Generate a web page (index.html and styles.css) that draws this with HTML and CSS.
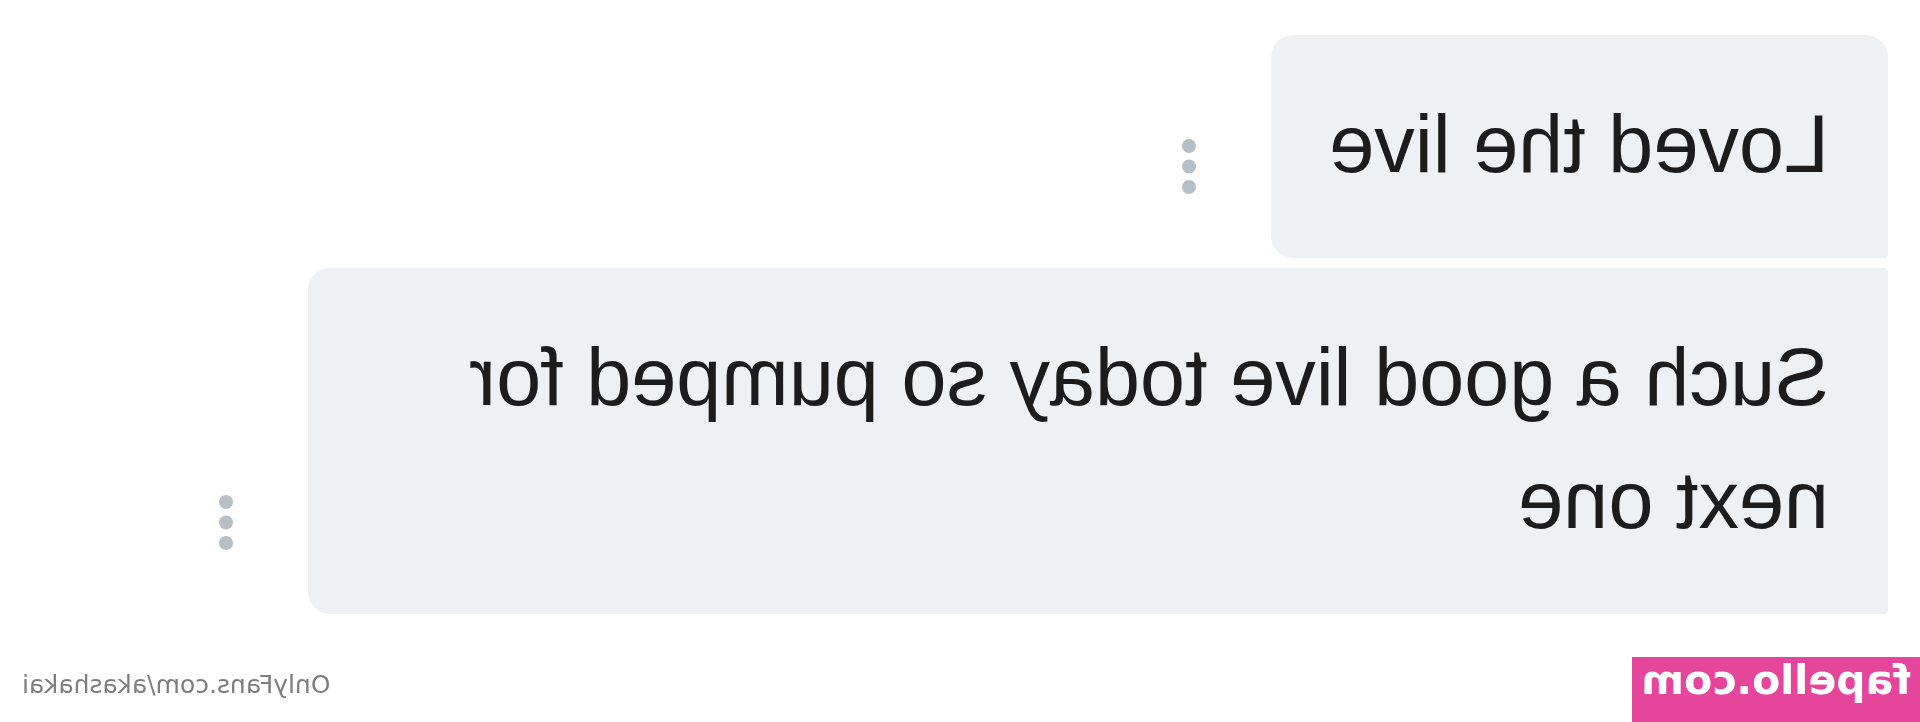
FILE: index.html
```html
<!DOCTYPE html>
<html lang="en">
<head>
    <meta charset="UTF-8">
    <title>Chat</title>
    <link rel="stylesheet" href="styles.css">
</head>
<body>
<div class="screen">
    <div class="thread">
        <div class="msg-row">
            <div class="bubble bubble-first">Loved the live</div>
            <svg class="more" width="14" height="55" viewBox="0 0 14 55">
                <circle cx="7" cy="7" r="7"/>
                <circle cx="7" cy="27.5" r="7"/>
                <circle cx="7" cy="48" r="7"/>
            </svg>
        </div>
        <div class="msg-row">
            <div class="bubble bubble-mid">Such a good live today so pumped for next one</div>
            <svg class="more" width="14" height="55" viewBox="0 0 14 55">
                <circle cx="7" cy="7" r="7"/>
                <circle cx="7" cy="27.5" r="7"/>
                <circle cx="7" cy="48" r="7"/>
            </svg>
        </div>
    </div>
    <div class="footer">
        <div class="brand">fapello.com</div>
        <div class="credit">OnlyFans.com/akashakai</div>
    </div>
</div>
</body>
</html>
```

FILE: styles.css
```css
body{
    margin: 0;
    background: #ffffff;
}
/* the whole shot is flipped left to right */
.screen{
    width: 1920px;
    height: 722px;
    overflow: hidden;
    transform: scaleX(-1);
    display: flex;
    flex-direction: column;
}
.thread{
    padding: 35px 0 0 32px;
    display: flex;
    flex-direction: column;
    gap: 10px;
}
.msg-row{
    display: flex;
    align-items: flex-end;
    gap: 75px;
}
.bubble{
    max-width: 1580px;
    box-sizing: border-box;
    padding: 48px 58px 52px 59px;
    background-color: #eef1f3;
    color: #1c1c1c;
    font-family: "Liberation Sans", Arial, sans-serif;
    font-size: 81px;
    line-height: 123px;
}
.bubble-first{
    border-radius: 22px 22px 22px 4px;
}
.bubble-mid{
    border-radius: 4px 22px 22px 4px;
}
.more{
    flex: none;
    fill: #b6bec6;
    margin-bottom: 64px;
}
.footer{
    margin-top: 43px;
    height: 65px;
    display: flex;
    justify-content: space-between;
}
.brand{
    width: 288px;
    height: 65px;
    box-sizing: border-box;
    padding-left: 9px;
    background-color: #e6459c;
    color: #ffffff;
    font-family: "DejaVu Sans", sans-serif;
    font-weight: bold;
    font-size: 41px;
    line-height: 47px;
}
.credit{
    padding: 13px 22px 0 0;
    color: #7e7e7e;
    font-family: "DejaVu Sans", sans-serif;
    font-size: 25px;
}
```
